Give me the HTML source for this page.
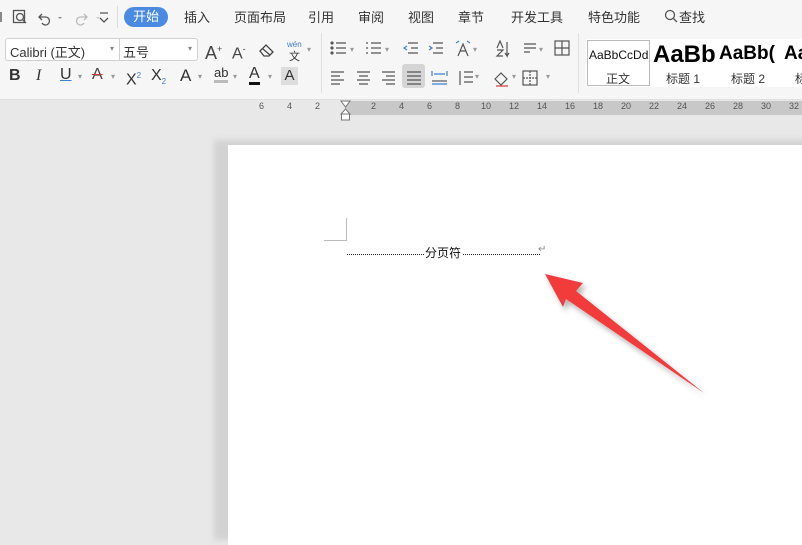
<!DOCTYPE html>
<html><head><meta charset="utf-8"><style>
*{margin:0;padding:0;box-sizing:border-box}
body{width:802px;height:536px;overflow:hidden;background:#e8e8e8;font-family:"Liberation Sans","Noto Sans CJK SC",sans-serif;position:relative;color:#333}
.a{position:absolute;white-space:nowrap}
.tb{left:0;top:0;width:802px;height:100px;background:#f6f6f6;border-bottom:1px solid #e0e0e0}
.tab{font-size:13px;top:7px;color:#333}
.ic{font-size:15px;color:#444}
.dd{position:absolute;font-size:8px;color:#999}
</style></head><body>
<div class="a tb"></div>
<div class="a" style="left:0;top:12px;width:2px;height:10px;background:#888"></div>
<svg class="a" style="left:12px;top:8px" width="100" height="20" viewBox="0 0 100 20">
<rect x="1.5" y="2.5" width="11" height="12" fill="none" stroke="#555" stroke-width="1.3"/><circle cx="8" cy="9" r="3.5" fill="#f6f6f6" stroke="#555" stroke-width="1.3"/><line x1="10.5" y1="11.5" x2="14" y2="15" stroke="#555" stroke-width="1.3"/>
<path d="M30 6 l-3 3 3 3 M27 9 h6 a4 4 0 1 1 -3 6" fill="none" stroke="#555" stroke-width="1.3"/><path d="M46 9 l2 2 2-2z" fill="#888"/>
<path d="M72 6 l3 3 -3 3 M75 9 h-6 a4 4 0 1 0 3 6" fill="none" stroke="#bbb" stroke-width="1.3"/><path d="M84 9 l2 2 2-2z" fill="#ccc"/>
<path d="M88 5 h8 M88 10 l4 4 4-4" fill="none" stroke="#555" stroke-width="1.3"/>
</svg>
<div class="a" style="left:117px;top:6px;width:1px;height:22px;background:#ddd"></div>
<div class="a" style="left:124px;top:7px;width:44px;height:20px;border-radius:10px;background:#4a8ae0;color:#fff;font-size:13px;text-align:center;line-height:20px">开始</div>
<div class="a tab" style="left:184px">插入</div>
<div class="a tab" style="left:234px">页面布局</div>
<div class="a tab" style="left:308px">引用</div>
<div class="a tab" style="left:358px">审阅</div>
<div class="a tab" style="left:408px">视图</div>
<div class="a tab" style="left:458px">章节</div>
<div class="a tab" style="left:511px">开发工具</div>
<div class="a tab" style="left:588px">特色功能</div>
<svg class="a" style="left:664px;top:9px" width="14" height="14"><circle cx="6" cy="6" r="4.5" fill="none" stroke="#555" stroke-width="1.3"/><line x1="9.5" y1="9.5" x2="13" y2="13" stroke="#555" stroke-width="1.3"/></svg>
<div class="a tab" style="left:679px">查找</div>
<div class="a" style="left:5px;top:38px;width:193px;height:23px;border:1px solid #d0d0d0;border-radius:3px;background:#fff"></div>
<div class="a" style="left:119px;top:39px;width:1px;height:21px;background:#d0d0d0"></div>
<div class="a" style="left:10px;top:42px;font-size:13px">Calibri (正文)</div>
<div class="a" style="left:123px;top:42px;font-size:13px">五号</div>
<div class="a" style="left:110px;top:44px;font-size:8px;color:#888">▾</div>
<div class="a" style="left:188px;top:44px;font-size:8px;color:#888">▾</div>
<div class="a ic" style="left:205px;top:38px;font-size:18px;line-height:22px">A<sup style="font-size:9px">+</sup></div>
<div class="a ic" style="left:232px;top:39px;font-size:16px;line-height:20px">A<sup style="font-size:9px">-</sup></div>
<svg class="a" style="left:258px;top:42px" width="18" height="16"><path d="M2 9l6-6 7 7-4 4H6z M5 7l7 6" fill="none" stroke="#444" stroke-width="1.3"/></svg>
<div class="a" style="left:287px;top:40px;font-size:8px;color:#3b7fd8">wén</div>
<div class="a" style="left:289px;top:48px;font-size:11px">文</div>
<span class="dd" style="left:307px;top:45px">▾</span>
<div class="a" style="left:9px;top:67px;font-size:16px;font-weight:bold">B</div>
<div class="a" style="left:36px;top:67px;font-size:16px;font-style:italic;font-family:'Liberation Serif'">I</div>
<div class="a" style="left:60px;top:66px;font-size:16px;text-decoration:underline;text-decoration-color:#3b7fd8">U</div>
<span class="dd" style="left:78px;top:72px">▾</span>
<div class="a" style="left:92px;top:66px;font-size:16px;color:#444;text-decoration:line-through;text-decoration-color:#d33">A</div>
<span class="dd" style="left:111px;top:72px">▾</span>
<div class="a" style="left:126px;top:66px;font-size:16px;line-height:20px">X<sup style="font-size:8px;color:#3b7fd8">2</sup></div>
<div class="a" style="left:151px;top:66px;font-size:16px;line-height:20px">X<sub style="font-size:8px;color:#3b7fd8">2</sub></div>
<div class="a" style="left:180px;top:66px;font-size:17px">A</div>
<span class="dd" style="left:198px;top:72px">▾</span>
<div class="a" style="left:214px;top:65px;font-size:13px;border-bottom:3px solid #bbb">ab</div>
<span class="dd" style="left:233px;top:72px">▾</span>
<div class="a" style="left:249px;top:65px;font-size:16px;border-bottom:3px solid #111;line-height:17px">A</div>
<span class="dd" style="left:268px;top:72px">▾</span>
<div class="a" style="left:281px;top:67px;width:17px;height:18px;background:#ddd;font-size:15px;text-align:center">A</div>
<div class="a" style="left:321px;top:33px;width:1px;height:60px;background:#e0e0e0"></div>
<svg class="a" style="left:330px;top:40px" width="240" height="48" stroke="#555" stroke-width="1.2" fill="none">
<g><path d="M6 3h10M6 8h10M6 13h10"/><circle cx="2" cy="3" r="1" fill="#555"/><circle cx="2" cy="8" r="1" fill="#555"/><circle cx="2" cy="13" r="1" fill="#555"/></g>
<g transform="translate(35 0)"><path d="M6 3h10M6 8h10M6 13h10M1 3h2M1 8h2M1 13h2"/></g>
<g transform="translate(72 0)"><path d="M6 3h10M9 8h7M6 13h10" /><path d="M5 6l-3 2 3 2" stroke="#3b7fd8"/></g>
<g transform="translate(97 0)"><path d="M6 3h10M9 8h7M6 13h10" /><path d="M2 6l3 2-3 2" stroke="#3b7fd8"/></g>
<g transform="translate(125 0)"><path d="M3 16l5-12 5 12M5 11h6"/><path d="M1 3l3-2M15 3l-3-2" stroke="#3b7fd8"/></g>
<g transform="translate(165 0)"><path d="M2 8l3-7 3 7M2 10h6l-6 6h6M12 2v14l-2-3M12 16l2-3" /></g>
<g transform="translate(192 0)"><path d="M2 4h12M2 8h12M2 12h6" /></g>
<g transform="translate(224 0)"><rect x="1" y="1" width="14" height="14"/><path d="M8 1v14M1 8h14"/></g>
<g transform="translate(0 30)"><path d="M1 2h13M1 6h9M1 10h13M1 14h9"/></g>
<g transform="translate(26 30)"><path d="M1 2h13M3 6h9M1 10h13M3 14h9"/></g>
<g transform="translate(51 30)"><path d="M1 2h13M5 6h9M1 10h13M5 14h9"/></g>
<rect x="72" y="24" width="23" height="24" rx="3" fill="#d5d5d5" stroke="none"/>
<g transform="translate(76 30)"><path d="M1 2h14M1 6h14M1 10h14M1 14h14"/></g>
<g transform="translate(101 30)"><path d="M1 14h15M1 1v5M16 1v5M3 4h11" stroke="#3b7fd8"/><path d="M1 11h15"/></g>
<g transform="translate(127 30)"><path d="M7 2h9M7 7h9M7 12h9M3 1v14" /></g>
<g transform="translate(163 30)"><path d="M2 9l6-6 6 6-6 6z"/><path d="M3 16h12" stroke="#d33"/></g>
<g transform="translate(192 30)"><rect x="1" y="1" width="14" height="14"/><path d="M8 1v14M1 8h14" stroke-dasharray="2 1"/></g>
</svg>
<span class="dd" style="left:350px;top:45px">▾</span><span class="dd" style="left:385px;top:45px">▾</span><span class="dd" style="left:473px;top:45px">▾</span><span class="dd" style="left:539px;top:45px">▾</span><span class="dd" style="left:475px;top:72px">▾</span><span class="dd" style="left:512px;top:72px">▾</span><span class="dd" style="left:546px;top:72px">▾</span>
<div class="a" style="left:578px;top:33px;width:1px;height:60px;background:#e0e0e0"></div>
<div class="a" style="left:586px;top:39px;width:216px;height:48px;background:#fff"></div>
<div class="a" style="left:587px;top:40px;width:63px;height:46px;border:1px solid #bbb"></div>
<div class="a" style="left:589px;top:48px;font-size:12px;color:#111">AaBbCcDd</div>
<div class="a" style="left:606px;top:70px;font-size:12px">正文</div>
<div class="a" style="left:653px;top:41px;font-size:24px;font-weight:bold;color:#000">AaBb</div>
<div class="a" style="left:666px;top:70px;font-size:12px">标题 1</div>
<div class="a" style="left:719px;top:43px;font-size:19px;font-weight:bold;color:#000">AaBb(</div>
<div class="a" style="left:731px;top:70px;font-size:12px">标题 2</div>
<div class="a" style="left:784px;top:43px;font-size:19px;font-weight:bold;color:#000">Aa</div>
<div class="a" style="left:795px;top:70px;font-size:12px">标</div>
<div class="a" style="left:345px;top:101px;width:457px;height:14px;background:#c8c8c8"></div>
<div class="a" style="left:0;top:101px;width:802px;font-size:9px;color:#555">
<span class="a" style="left:259px">6</span><span class="a" style="left:287px">4</span><span class="a" style="left:315px">2</span>
<span class="a" style="left:371px">2</span><span class="a" style="left:399px">4</span><span class="a" style="left:427px">6</span><span class="a" style="left:455px">8</span><span class="a" style="left:481px">10</span><span class="a" style="left:509px">12</span><span class="a" style="left:537px">14</span><span class="a" style="left:565px">16</span><span class="a" style="left:593px">18</span><span class="a" style="left:621px">20</span><span class="a" style="left:649px">22</span><span class="a" style="left:677px">24</span><span class="a" style="left:705px">26</span><span class="a" style="left:733px">28</span><span class="a" style="left:761px">30</span><span class="a" style="left:789px">32</span></div>
<svg class="a" style="left:340px;top:100px" width="12" height="22"><path d="M1 1h9L5.5 7zM5.5 9L1 14h9z" fill="#fff" stroke="#777"/><rect x="1.5" y="14" width="8" height="6" fill="#fff" stroke="#777"/></svg>
<div class="a" style="left:214px;top:140px;width:600px;height:400px;background:#d2d2d2;filter:blur(3px)"></div>
<div class="a" style="left:228px;top:145px;width:580px;height:400px;background:#fff"></div>
<div class="a" style="left:346px;top:218px;width:1px;height:23px;background:#bbb"></div>
<div class="a" style="left:324px;top:240px;width:23px;height:1px;background:#bbb"></div>
<div class="a" style="left:347px;top:254px;width:193px;border-top:1px dotted #222"></div>
<div class="a" style="left:424px;top:244px;font-size:12px;background:#fff;color:#111;padding:0 1px">分页符</div>
<div class="a" style="left:538px;top:244px;font-size:10px;color:#888">↵</div>
<svg class="a" style="left:0;top:0" width="802" height="536">
<defs><filter id="s"><feDropShadow dx="3" dy="4" stdDeviation="3" flood-color="#000" flood-opacity="0.3"/></filter></defs>
<path d="M545 274 L583 283 L576 291 L704 393 L566 299 L563 307 Z" fill="#f23a3a" filter="url(#s)"/>
</svg>
</body></html>
